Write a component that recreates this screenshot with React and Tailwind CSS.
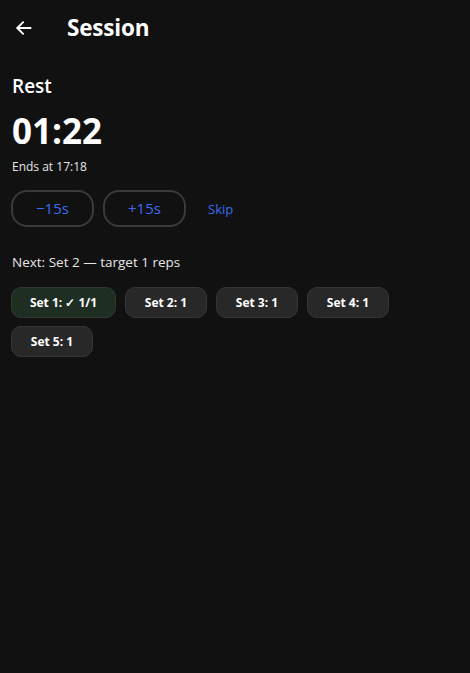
export default function App() {
  const sets = [
    { label: 'Set 1: ✓ 1/1', done: true },
    { label: 'Set 2: 1' },
    { label: 'Set 3: 1' },
    { label: 'Set 4: 1' },
    { label: 'Set 5: 1' },
  ]

  return (
    <div className="min-h-screen bg-[#111111] text-white" style={{ fontFamily: '"Open Sans", "Noto Sans", sans-serif' }}>
      <div className="flex h-[55px] items-center px-[12px]">
        <button className="flex h-6 w-6 items-center justify-center">
          <svg width="20" height="20" viewBox="0 0 24 24" fill="none" stroke="white" strokeWidth="2.2" strokeLinecap="round" strokeLinejoin="round">
            <path d="M20 12H4" />
            <path d="M11 5l-7 7 7 7" />
          </svg>
        </button>
        <h1 className="ml-[31px] text-[22.5px] font-bold tracking-[-0.2px]">Session</h1>
      </div>

      <div className="px-[11px] pt-[16px]">
        <div className="pl-[1px] text-[19px] font-semibold leading-[30px]">Rest</div>
        <div className="mt-[8px] pl-[1px] text-[35px] font-bold leading-[44px]">01:22</div>
        <div className="mt-[6px] pl-[1px] text-[12px] leading-[16px] text-[#e5e5e5]">Ends at 17:18</div>

        <div className="mt-[15px] flex items-center gap-[9px]">
          <button className="h-[37px] w-[83px] rounded-[16px] border-2 border-[#3a3a3a] text-[15px] font-medium text-[#3a6cf0]">−15s</button>
          <button className="h-[37px] w-[83px] rounded-[16px] border-2 border-[#3a3a3a] text-[15px] font-medium text-[#3a6cf0]">+15s</button>
          <button className="ml-[13px] pt-[2px] text-[13px] font-medium text-[#3a6cf0]">Skip</button>
        </div>

        <div className="mt-[25px] pl-[1px] text-[13.5px] text-[#e5e5e5]">Next: Set 2 — target 1 reps</div>

        <div className="mt-[15px] flex flex-wrap gap-x-[9px] gap-y-[8px] pr-[40px]">
          {sets.map((s) => (
            <div
              key={s.label}
              className={
                s.done
                  ? 'flex h-[31px] w-[105px] items-center justify-center rounded-[10px] border border-[#2e3a30] bg-[#1f2e22] text-[12px] font-bold'
                  : 'flex h-[31px] w-[82px] items-center justify-center rounded-[10px] border border-[#353535] bg-[#282828] text-[12px] font-bold'
              }
            >
              {s.label}
            </div>
          ))}
        </div>
      </div>
    </div>
  )
}
